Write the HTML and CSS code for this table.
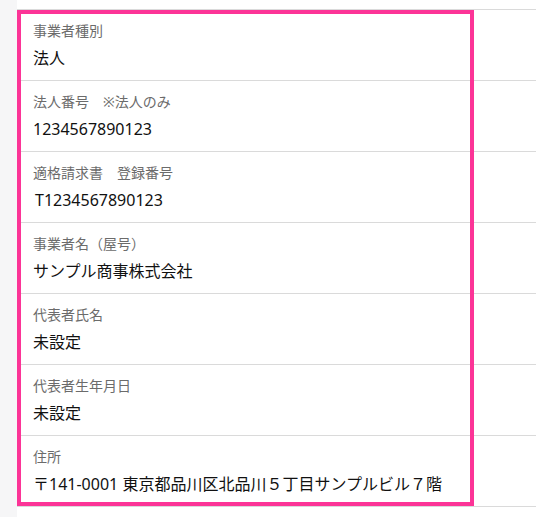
FILE: index.html
```html
<!DOCTYPE html>
<html lang="ja">
<head>
<meta charset="utf-8">
<link rel="stylesheet" href="styles.css">
</head>
<body>
<div class="page">
  <div class="side"></div>
  <div class="main">
    <dl class="list">
      <div class="row">
        <dt class="label">事業者種別</dt>
        <dd class="value">法人</dd>
      </div>
      <div class="row">
        <dt class="label">法人番号　※法人のみ</dt>
        <dd class="value">1234567890123</dd>
      </div>
      <div class="row">
        <dt class="label">適格請求書　登録番号</dt>
        <dd class="value value-t">T1234567890123</dd>
      </div>
      <div class="row">
        <dt class="label">事業者名（屋号）</dt>
        <dd class="value">サンプル商事株式会社</dd>
      </div>
      <div class="row">
        <dt class="label">代表者氏名</dt>
        <dd class="value">未設定</dd>
      </div>
      <div class="row">
        <dt class="label">代表者生年月日</dt>
        <dd class="value">未設定</dd>
      </div>
      <div class="row">
        <dt class="label">住所</dt>
        <dd class="value">〒141-0001 東京都品川区北品川５丁目サンプルビル７階</dd>
      </div>
    </dl>
    <div class="highlight"></div>
  </div>
</div>
</body>
</html>
```

FILE: styles.css
```css
html, body {
  margin: 0;
  padding: 0;
  background: #ffffff;
  font-family: "Noto Sans", "Noto Sans CJK JP", sans-serif;
}
.page {
  display: flex;
  min-height: 517px;
}
.side {
  width: 17px;
  flex: none;
  background: #f6f6f7;
}
.main {
  flex: 1;
  position: relative;
  padding-top: 9px;
}
.list {
  margin: 0;
  border-top: 1px solid #dadada;
}
.row {
  display: flex;
  flex-direction: column;
  height: 71px;
  box-sizing: border-box;
  padding: 11px 0 10px 16px;
  border-bottom: 1px solid #dadada;
}
.label {
  margin: 0;
  font-size: 14px;
  line-height: 20px;
  color: #6b6b6b;
  white-space: pre;
}
.value {
  margin: 5px 0 0 0;
  font-size: 16px;
  line-height: 24px;
  color: #111111;
  white-space: nowrap;
}
.value-t {
  padding-left: 2px;
}
.highlight {
  position: absolute;
  left: 0;
  top: 10px;
  width: 457px;
  height: 496px;
  box-sizing: border-box;
  border: 4px solid #fc3497;
  pointer-events: none;
}
```
